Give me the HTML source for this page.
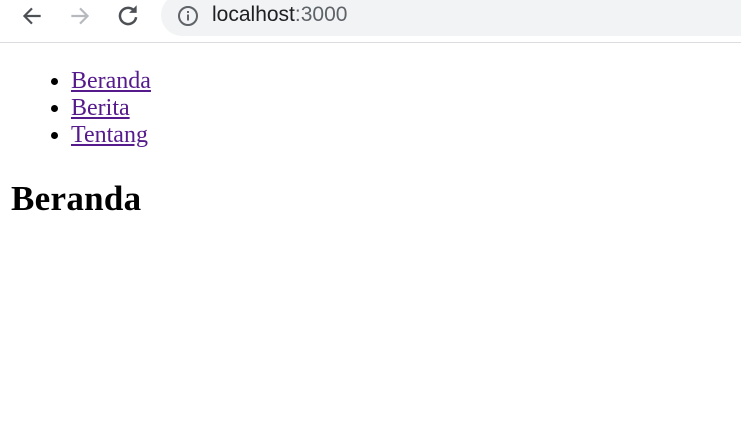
<!DOCTYPE html>
<html><head><style>
body{margin:0;width:741px;height:427px;background:#fff;overflow:hidden;position:relative}
.bar{position:absolute;left:0;top:0;width:741px;height:42px;background:#fff;border-bottom:1px solid #dadce0}
.omni{position:absolute;left:161px;top:-6px;width:600px;height:42px;background:#f1f3f4;border-radius:21px}
.url{position:absolute;left:212px;top:3px;font:21px "Liberation Sans",sans-serif;color:#202124}
.url span{color:#5f6368}
ul{position:absolute;top:68px;left:0;margin:0;padding-left:71px;font:24px/27px "Liberation Serif",serif}
a{color:#551a8b}
h1{position:absolute;top:179px;left:11px;margin:0;font:bold 35px "Liberation Serif",serif;letter-spacing:0.3px}
</style></head><body>
<div class="bar">
<svg style="position:absolute;left:19px;top:3px" width="26" height="26" viewBox="0 0 24 24"><path d="M20 12H5M12 5l-7 7 7 7" fill="none" stroke="#4d5156" stroke-width="2"/></svg>
<svg style="position:absolute;left:67px;top:3px" width="26" height="26" viewBox="0 0 24 24"><path d="M4 12h15M12 5l7 7-7 7" fill="none" stroke="#b6babf" stroke-width="2"/></svg>
<svg style="position:absolute;left:115px;top:2px" width="26" height="26" viewBox="0 0 24 24"><path d="M18.5 9A7.5 7.5 0 1 0 19.5 14" fill="none" stroke="#4d5156" stroke-width="2.3"/><path d="M20 3v7h-7z" fill="#4d5156"/></svg>
<div class="omni"></div>
<svg style="position:absolute;left:177px;top:5px" width="22" height="22" viewBox="0 0 22 22"><circle cx="11" cy="11" r="9" fill="none" stroke="#5f6368" stroke-width="2"/><rect x="10" y="9.5" width="2" height="6" fill="#5f6368"/><rect x="10" y="6" width="2" height="2" fill="#5f6368"/></svg>
<div class="url">localhost<span>:3000</span></div>
</div>
<ul><li><a href="#">Beranda</a></li><li><a href="#">Berita</a></li><li><a href="#">Tentang</a></li></ul>
<h1>Beranda</h1>
</body></html>
